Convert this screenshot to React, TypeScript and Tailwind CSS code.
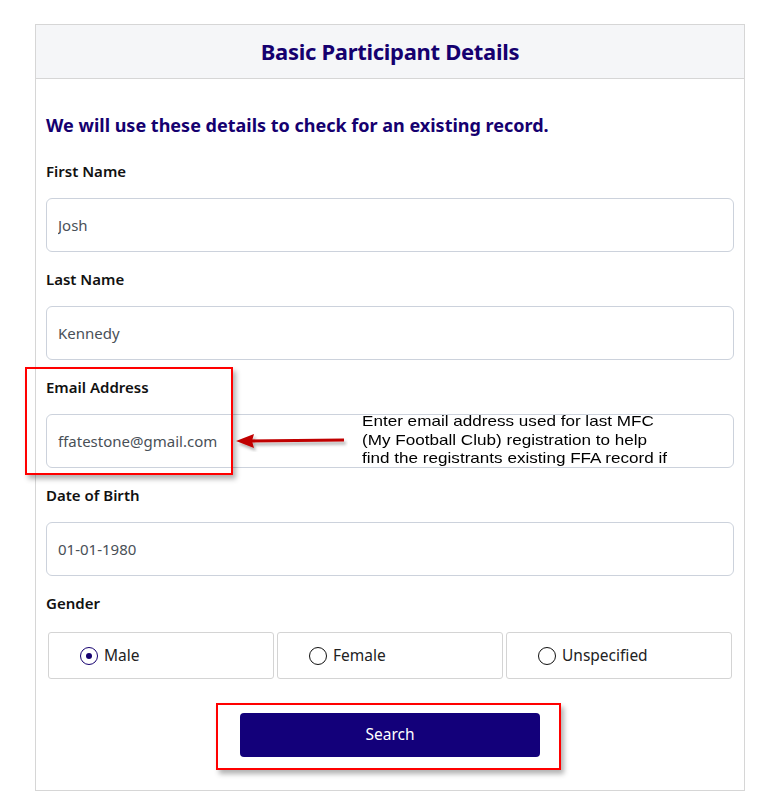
import React, { useState } from "react";

const navy = "text-[#15006f]";

function Field({ label, value }: { label: string; value: string }) {
  return (
    <div className="mb-[15px]">
      <label className="block text-[15px] leading-[24px] font-semibold text-[#111]">{label}</label>
      <input
        readOnly
        value={value}
        className="mt-[15px] block w-full h-[54px] px-[11px] text-[15px] text-[#495057] border border-[#ccd2dc] rounded-[6px] outline-none"
      />
    </div>
  );
}

function Radio({ label, checked, onClick }: { label: string; checked: boolean; onClick: () => void }) {
  return (
    <button
      type="button"
      onClick={onClick}
      className="flex items-center h-[47px] pl-[31px] border border-[#d4d4d4] rounded-[3px] bg-white text-left"
    >
      <span
        className={
          "flex items-center justify-center w-[18px] h-[18px] rounded-full border-[1.5px] " +
          (checked ? "border-[#15006f]" : "border-[#111]")
        }
      >
        {checked && <span className="w-[6px] h-[6px] rounded-full bg-[#15006f]" />}
      </span>
      <span className="ml-[6px] text-[15.5px] text-[#222]">{label}</span>
    </button>
  );
}

export default function App() {
  const [gender, setGender] = useState("Male");

  return (
    <div className="bg-white min-h-screen pt-[24px] pl-[35px]" style={{ fontFamily: '"Noto Sans", "Open Sans", sans-serif' }}>
      <div className="relative w-[710px] border border-[#d6d6d6]">
        <div className="h-[54px] flex items-center justify-center bg-[#f5f6f8] border-b border-[#d6d6d6]">
          <h1 className={"text-[22px] font-bold tracking-[-0.3px] " + navy}>Basic Participant Details</h1>
        </div>

        <div className="px-[10px] pt-[33px] pb-[33px]">
          <h2 className={"text-[18px] leading-[26px] font-bold mb-[21px] " + navy}>
            We will use these details to check for an existing record.
          </h2>

          <Field label="First Name" value="Josh" />
          <Field label="Last Name" value="Kennedy" />
          <Field label="Email Address" value="ffatestone@gmail.com" />
          <Field label="Date of Birth" value="01-01-1980" />

          <label className="block text-[15px] leading-[24px] font-semibold text-[#111]">Gender</label>
          <div className="mt-[17px] px-[2px] grid grid-cols-3 gap-[3px]">
            {["Male", "Female", "Unspecified"].map((g) => (
              <Radio key={g} label={g} checked={gender === g} onClick={() => setGender(g)} />
            ))}
          </div>

          <div className="mt-[34px] flex justify-center">
            <button className="w-[300px] h-[44px] rounded-[4px] bg-[#13007a] text-white text-[15.5px]">Search</button>
          </div>
        </div>

        {/* annotation: email highlight */}
        <div className="absolute left-[-11px] top-[342px] w-[208px] h-[108px] border-2 border-[#ff0000] shadow-[3px_4px_5px_rgba(0,0,0,0.3)]" />

        {/* annotation: arrow */}
        <svg className="absolute left-[198px] top-[405px]" width="114" height="22" viewBox="0 0 114 22">
          <defs>
            <filter id="sh" x="-10%" y="-50%" width="130%" height="250%">
              <feDropShadow dx="2" dy="3" stdDeviation="1.5" floodColor="#000" floodOpacity="0.3" />
            </filter>
          </defs>
          <g filter="url(#sh)">
            <line x1="110" y1="10" x2="14" y2="11" stroke="#c00000" strokeWidth="3" />
            <polygon points="2,11 20,4 18,11 20,18" fill="#c00000" />
          </g>
        </svg>

        {/* annotation: note text */}
        <div
          className="absolute left-[326px] top-[387px] w-[300px] origin-left scale-x-[1.14] text-[15px] leading-[18.5px] text-black whitespace-nowrap"
          style={{ fontFamily: '"Liberation Sans", Arial, sans-serif' }}
        >
          Enter email address used for last MFC
          <br />
          (My Football Club) registration to help
          <br />
          find the registrants existing FFA record if
        </div>

        {/* annotation: search highlight */}
        <div className="absolute left-[180px] top-[678px] w-[345px] h-[67px] border-2 border-[#ff0000] shadow-[3px_4px_5px_rgba(0,0,0,0.3)]" />
      </div>
    </div>
  );
}
